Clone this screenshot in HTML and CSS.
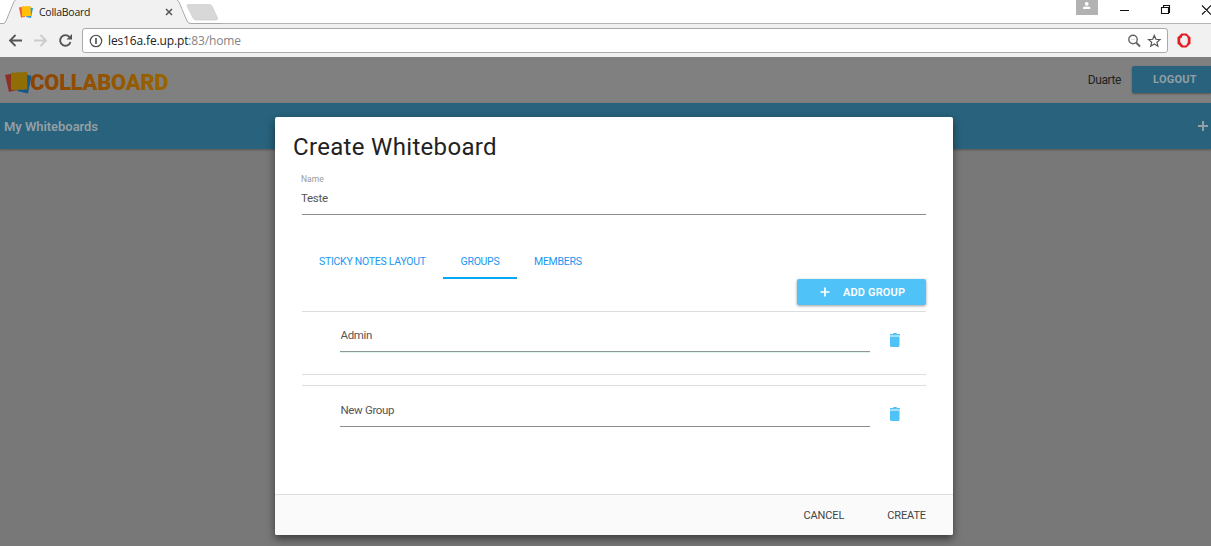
FILE: index.html
```html
<!DOCTYPE html>
<html lang="en">
<head>
<meta charset="utf-8">
<title>CollaBoard</title>
<link rel="stylesheet" href="styles.css">
</head>
<body>
<div class="window">
  <div class="tabstrip">
    <svg class="tab-shape" width="222" height="24" viewBox="0 0 222 24">
      <path d="M0 24V23.5H3Q5 23.500 6 21L14 1.500L15.500 0H177L179 2L187 21Q188 23.500 191 23.500H222V24Z" fill="#f1f1f1"/>
      <path d="M0 23.500H3Q5 23.500 6 21L14 1.500L15.500 0M177 0L179 2L187 21Q188 23.500 191 23.500H222" fill="none" stroke="#aaa"/>
      <path d="M188 4.500H209Q211 4.500 212 6L217.500 18Q218 20 216 20H196Q194 20 193 18L187 6Q186.500 4.500 188 4.500Z" fill="#d8d8d8" stroke="#c8c8c8" stroke-width=".6"/>
    </svg>
    <div class="tab">
      <svg width="14" height="12" viewBox="0 0 14 12"><path d="M0 1.500L5 .5 6 11 2 11.500Z" fill="#f4513b"/><path d="M9 1L14 2 12 12 7 11Z" fill="#2196f3"/><path d="M2.500 .5L11.500 0 12 10 3 10.500Z" fill="#ffc107"/></svg>
      <span class="tab-title">CollaBoard</span>
      <svg class="tab-close" width="8" height="8" viewBox="0 0 8 8"><path d="M1 1L7 7M7 1L1 7" stroke="#555" stroke-width="1.500"/></svg>
    </div>
    <div class="profile"><svg width="22" height="15" viewBox="0 0 22 15"><circle cx="10.700" cy="3.800" r="1.900" fill="#fff"/><path d="M7 9V7.800Q7 6.500 10.700 6.500T14.300 7.800V9Z" fill="#fff"/></svg></div>
    <svg class="controls" width="92" height="20" viewBox="0 0 92 20"><path d="M1 10.500H10M42.500 7.500H49.500V13.500H42.500ZM44.500 7V5.500H50.500V12.500H49.500M83 5.500L92 14.500M92 5.500L83 14.500" fill="none" stroke="#111" stroke-width="1.100"/></svg>
  </div>
  <div class="toolbar">
    <svg class="nav-icons" width="74" height="33" viewBox="0 0 74 33">
      <path d="M22 16.500H10M15.500 11L10 16.500L15.500 22" fill="none" stroke="#555" stroke-width="1.800"/>
      <path d="M34 16.500H46M40.500 11L46 16.500L40.500 22" fill="none" stroke="#ccc" stroke-width="1.800"/>
      <path d="M69.500 13A5.300 5.300 0 1 0 70.500 18" fill="none" stroke="#555" stroke-width="1.900"/><path d="M72 10V15.500H66.500Z" fill="#555"/>
    </svg>
    <div class="omnibox">
      <svg width="14" height="14" viewBox="0 0 14 14"><circle cx="7" cy="7" r="5.700" fill="none" stroke="#555" stroke-width="1.300"/><path d="M7 4V10" stroke="#555" stroke-width="1.700"/></svg>
      <span class="url">les16a.fe.up.pt<span class="url-path">:83/home</span></span>
      <svg class="box-icons" width="34" height="14" viewBox="0 0 34 14">
        <circle cx="6" cy="5.500" r="4.200" fill="none" stroke="#666" stroke-width="1.400"/><path d="M4 5.500H8" stroke="#ddd"/><path d="M9 8.500L13 12.500" stroke="#666" stroke-width="1.900"/>
        <path d="M27.300 1.400L28.900 5.300 33 5.600 29.900 8.200 30.900 12.200 27.300 10 23.700 12.200 24.700 8.200 21.600 5.600 25.700 5.300Z" fill="none" stroke="#555" stroke-width="1.200"/>
      </svg>
    </div>
    <svg class="ext" width="14" height="15" viewBox="0 0 14 15"><path d="M4.500 .5H9.500L13.500 4.500V10.500L9.500 14.500H4.500L.5 10.500V4.500Z" fill="#e31b23"/><path d="M3.200 6L4 4.500 5 5V3L7 2.300 9.500 3 10.800 5V9.500L9 12.500H6L3.200 9Z" fill="#eee"/></svg>
  </div>
  <main class="page">
    <header class="header">
      <div class="brand">
        <svg width="28" height="22" viewBox="0 0 28 22"><path d="M0 3L10 1 12 18 4 20Z" fill="#8d3024"/><path d="M17 1L26.500 4 23 21.500 12 19Z" fill="#12588c"/><path d="M6 .8L22 0 22.500 17.500 6 18Z" fill="#916e05"/></svg>
        <span class="brand-name">COLLABOARD</span>
      </div>
      <span class="user">Duarte</span>
      <button class="logout">LOGOUT</button>
    </header>
    <nav class="subnav">
      <span class="subnav-title">My Whiteboards</span>
      <svg width="12" height="12" viewBox="0 0 12 12"><path d="M6 1V11M1 6H11" stroke="#939fa4" stroke-width="2"/></svg>
    </nav>
  </main>
  <section class="modal">
    <div class="modal-body">
      <h1 class="title">Create Whiteboard</h1>
      <div class="field">
        <label class="label">Name</label>
        <div class="value">Teste</div>
      </div>
      <div class="tabs">
        <span class="tab-item layout-tab">STICKY NOTES LAYOUT</span>
        <span class="tab-item active">GROUPS</span>
        <span class="tab-item members-tab">MEMBERS</span>
      </div>
      <button class="add"><svg width="10" height="10" viewBox="0 0 10 10"><path d="M5 .5V9.500M.5 5H9.500" stroke="#fff" stroke-width="1.700"/></svg><span>ADD GROUP</span></button>
      <div class="group">
        <div class="group-name focused">Admin</div>
        <svg class="trash" width="10" height="14" viewBox="0 0 10 14"><path d="M0 1H3L3.500 0H6.500L7 1H10V2.500H0ZM0 3.500H9.500V12.500Q9.500 14 8 14H1.500Q0 14 0 12.500Z" fill="#4fc3f7"/></svg>
      </div>
      <div class="group last">
        <div class="group-name">New Group</div>
        <svg class="trash" width="10" height="14" viewBox="0 0 10 14"><path d="M0 1H3L3.500 0H6.500L7 1H10V2.500H0ZM0 3.500H9.500V12.500Q9.500 14 8 14H1.500Q0 14 0 12.500Z" fill="#4fc3f7"/></svg>
      </div>
    </div>
    <footer class="modal-footer"><span>CANCEL</span><span>CREATE</span></footer>
  </section>
</div>
</body>
</html>
```
FILE: styles.css
```css
* { box-sizing: border-box; }
body { margin: 0; font-family: Roboto, "Liberation Sans", sans-serif; }
svg { display: block; flex: none; }
button { border: 0; padding: 0; font-family: inherit; }
.window { position: relative; width: 1211px; height: 546px; overflow: hidden; display: flex; flex-direction: column; }
.tabstrip { position: relative; height: 24px; flex: none; display: flex; background: #fff; border-bottom: 1px solid #b5b5b5; }
.tab-shape { position: absolute; left: 0; top: 0; }
.tab { position: relative; width: 190px; height: 23px; display: flex; align-items: center; padding-left: 19px; }
.tab-title { margin-left: 6px; width: 127px; font: 10.5px/22px "Open Sans", sans-serif; letter-spacing: -.25px; color: #222; }
.tab-close { margin-left: -1px; }
.profile { margin-left: 886px; width: 22px; height: 15px; background: #b2b2b2; }
.controls { margin-left: 21px; }
.toolbar { height: 33px; flex: none; display: flex; align-items: center; background: #f1f1f1; }
.omnibox { margin-left: 8px; width: 1086px; height: 25px; border: 1px solid #aaa; border-radius: 3px; background: #fff; display: flex; align-items: center; padding-left: 6px; }
.url { margin-left: 5px; font: 12px/20px "Open Sans", sans-serif; letter-spacing: -.14px; color: #222; }
.url-path { color: #858585; }
.box-icons { margin: 0 6px 0 auto; }
.ext { margin-left: 9px; }
.page { flex: 1; background: #787878; }
.header { height: 46px; background: #808080; display: flex; align-items: center; }
.brand { display: flex; align-items: center; padding: 5px 0 0 5px; }
.brand-name { margin: 1px 0 0 -3px; font-size: 22px; font-weight: 900; line-height: 22px; letter-spacing: -.35px; background: linear-gradient(90deg, #8d4200, #986400); -webkit-background-clip: text; background-clip: text; color: transparent; }
.user { margin-left: auto; font-size: 12px; letter-spacing: -.4px; color: #222; }
.logout { margin: 0 0 1px 11px; width: 79px; height: 27px; padding: 0 0 1px 7px; border-radius: 2px 0 0 2px; background: #28627c; color: #939fa4; font-size: 11px; font-weight: 700; letter-spacing: .25px; box-shadow: 0 1px 2px #555; }
.subnav { height: 46px; padding: 0 2px 0 4px; display: flex; align-items: center; justify-content: space-between; background: #28627c; color: #939fa4; box-shadow: 0 1px 2px #555; }
.subnav-title { font-size: 13px; font-weight: 600; letter-spacing: -.05px; }
.modal { position: absolute; left: 275px; top: 117px; width: 678px; height: 418px; display: flex; flex-direction: column; border-radius: 2px; background: #fff; box-shadow: 0 4px 8px rgba(0,0,0,.5); }
.modal-body { height: 377px; padding: 14px 27px 0; display: flex; flex-direction: column; }
.title { margin: 0 0 0 -9px; font-size: 24px; line-height: 33px; font-weight: 400; letter-spacing: .32px; color: #222; }
.field { height: 51px; border-bottom: 1px solid #8c8c8c; padding-top: 9px; }
.label { display: block; margin-left: -1px; font-size: 8.5px; line-height: 12px; color: #999; }
.value { margin: 6px 0 0 -1px; font-size: 11.5px; line-height: 14px; letter-spacing: -.3px; color: #555; }
.tabs { margin-top: 29px; height: 35px; display: flex; flex: none; }
.tab-item { height: 35px; line-height: 35px; font-size: 10.5px; letter-spacing: -.27px; color: #2196f3; white-space: nowrap; }
.layout-tab { width: 141px; padding-left: 17px; }
.active { width: 74px; text-align: center; border-bottom: 2px solid #03a9f4; }
.members-tab { padding-left: 17px; }
.add { align-self: flex-end; flex: none; width: 129px; height: 26px; display: flex; align-items: center; padding-left: 23px; gap: 13px; border-radius: 2px; background: #4fc3f7; color: #fff; font-size: 11px; font-weight: 600; letter-spacing: .15px; box-shadow: 0 1px 3px rgba(0,0,0,.4); }
.group { margin-top: 6px; height: 64px; flex: none; display: flex; border-top: 1px solid #ddd; border-bottom: 1px solid #ddd; padding-left: 38px; }
.last { margin-top: 10px; border-bottom: 0; }
.group-name { width: 530px; height: 41px; padding-top: 17px; border-bottom: 1px solid #8c8c8c; font-size: 11.5px; line-height: 14px; letter-spacing: -.35px; text-indent: .5px; color: #555; }
.focused { height: 40px; padding-top: 16px; border-bottom-color: #8b9a99; box-shadow: 0 1px #e0f4f2; }
.trash { margin: 21px 0 0 20px; }
.modal-footer { height: 41px; border-top: 1px solid #ddd; border-radius: 0 0 2px 2px; background: #fafafa; padding-right: 27px; display: flex; justify-content: flex-end; align-items: center; gap: 43px; font-size: 11px; letter-spacing: -.13px; color: #444; }
```
